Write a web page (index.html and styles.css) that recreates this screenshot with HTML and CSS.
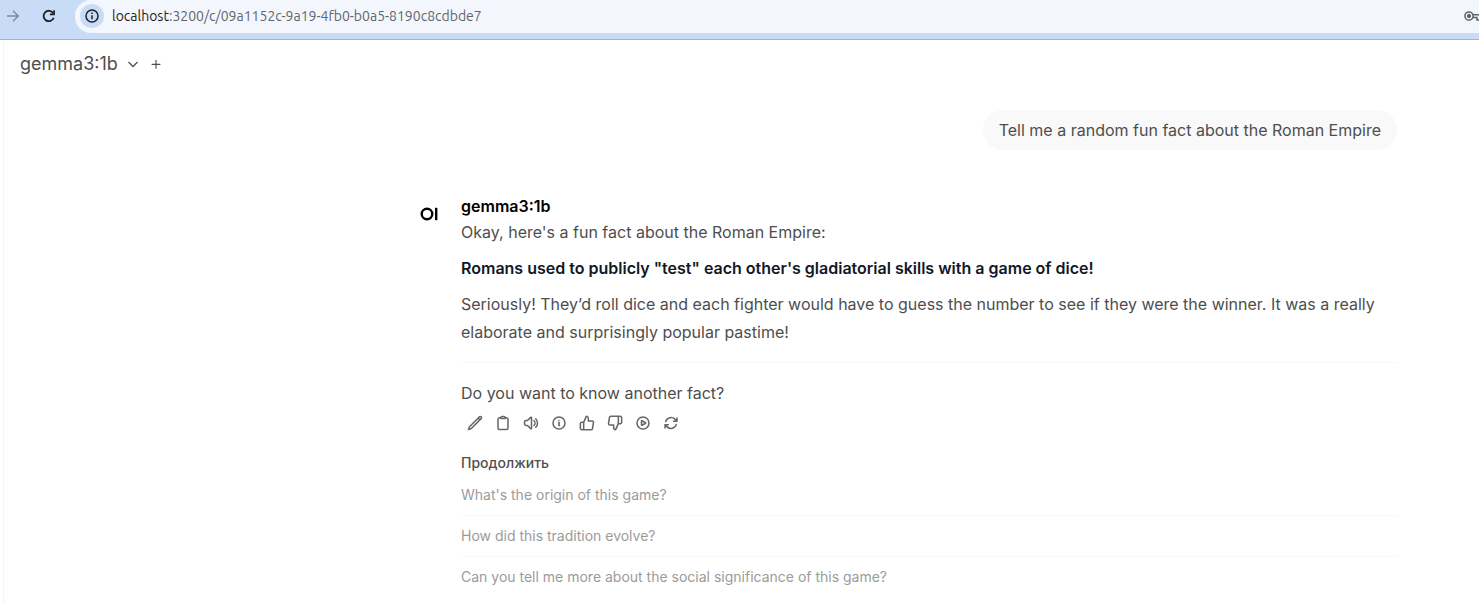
FILE: index.html
```html
<!DOCTYPE html>
<html lang="en">
<head>
<meta charset="utf-8">
<meta name="viewport" content="width=device-width, initial-scale=1">
<title>gemma3:1b</title>
<link rel="stylesheet" href="styles.css">
</head>
<body>
<header class="browser-bar">
  <button class="nav-button nav-forward" aria-label="Forward"><svg class="icon" viewBox="0 0 16 16"><path d="M2 8h11M8 2.7 13.300 8 8 13.300" stroke-width="1.500"/></svg></button>
  <button class="nav-button nav-reload" aria-label="Reload"><svg class="icon" viewBox="0 0 16 16"><path d="M12.700 9.700A5.200 5.200 0 1 1 12.200 5.200" stroke-width="1.800"/><path d="M13.900 2.200v5H8.900V5.500h3.300V2.200z" fill="currentColor" stroke="none"/></svg></button>
  <div class="address">
    <button class="site-info" aria-label="Site information"><svg class="icon" viewBox="0 0 16 16"><circle cx="8" cy="8" r="6" stroke-width="1.500"/><path d="M8 7.300v4M8 4.500v1.500" stroke-width="1.500"/></svg></button>
    <div class="url" role="textbox" contenteditable="true" spellcheck="false" aria-label="Address"><span class="host">localhost</span>:3200/c/09a1152c-9a19-4fb0-b0a5-8190c8cdbde7</div>
    <button class="key" aria-label="Passwords"><svg viewBox="0 0 20 16"><circle cx="5" cy="8" r="4.100" fill="none" stroke="currentColor" stroke-width="1.500"/><circle cx="5" cy="8" r="1.700" fill="currentColor"/><path d="M9 6.800h10v2.700h-2V12h-4V9.500H9" fill="none" stroke="currentColor" stroke-width="1.500"/></svg></button>
  </div>
</header>
<div class="app">
  <nav class="model-bar" aria-label="Model">
    <button class="model-picker">gemma3:1b<svg class="chevron" viewBox="0 0 24 24"><path d="m21 8-9 9-9-9" stroke-width="2.500"/></svg></button>
    <button class="add-model" aria-label="Add model"><svg viewBox="0 0 24 24"><path d="M12 5v15M4.500 12.500h15" stroke-width="2"/></svg></button>
  </nav>
  <main class="chat">
    <div class="user-message">Tell me a random fun fact about the Roman Empire</div>
    <article class="reply">
      <svg class="avatar" viewBox="0 0 28 28" role="img" aria-label="OI"><circle cx="12" cy="14" r="5.300" fill="none" stroke="#000" stroke-width="2.400"/><rect x="20" y="7.800" width="2.400" height="12.400" fill="#000"/></svg>
      <div class="reply-body">
        <h1 class="model-name">gemma3:1b</h1>
        <div class="prose">
          <p>Okay, here's a fun fact about the Roman Empire:</p>
          <p><strong>Romans used to publicly "test" each other's gladiatorial skills with a game of dice!</strong></p>
          <p>Seriously! They’d roll dice and each fighter would have to guess the number to see if they were the winner. It was a really elaborate and surprisingly popular pastime!</p>
          <hr>
          <p>Do you want to know another fact?</p>
        </div>
        <div class="actions">
          <button aria-label="Edit"><svg viewBox="0 0 24 24"><path d="M16.862 4.487l1.687-1.688a1.875 1.875 0 112.652 2.652L6.832 19.820a4.500 4.500 0 01-1.897 1.130l-2.685.8.8-2.685a4.500 4.500 0 011.130-1.897L16.863 4.487zm0 0L19.500 7.125"/></svg></button>
          <button aria-label="Copy"><svg viewBox="0 0 24 24"><path d="M15.666 3.888A2.250 2.250 0 0013.500 2.250h-3c-1.030 0-1.900.693-2.166 1.638m7.332 0c.055.194.084.400.084.612v0a.750.750 0 01-.750.750H9a.750.750 0 01-.750-.750v0c0-.212.030-.418.084-.612m7.332 0c.646.049 1.288.110 1.927.184 1.100.128 1.907 1.077 1.907 2.185V19.500a2.250 2.250 0 01-2.250 2.250H6.750A2.250 2.250 0 014.500 19.500V6.257c0-1.108.806-2.057 1.907-2.185a48.208 48.208 0 011.927-.184"/></svg></button>
          <button aria-label="Read aloud"><svg viewBox="0 0 24 24"><path d="M19.114 5.636a9 9 0 010 12.728M16.463 8.288a5.250 5.250 0 010 7.424M6.750 8.250l4.720-4.720a.750.750 0 011.280.530v15.880a.750.750 0 01-1.280.530l-4.720-4.720H4.510c-.880 0-1.704-.507-1.938-1.354A9.010 9.010 0 012.250 12c0-.830.112-1.633.322-2.396C2.806 8.756 3.630 8.250 4.510 8.250H6.750z"/></svg></button>
          <button aria-label="Information"><svg viewBox="0 0 24 24"><path d="M11.250 11.250l.041-.020a.750.750 0 011.063.852l-.708 2.836a.750.750 0 001.063.853l.041-.021M21 12a9 9 0 11-18 0 9 9 0 0118 0zm-9-3.750h.008v.008H12V8.250z"/></svg></button>
          <button aria-label="Good response"><svg viewBox="0 0 24 24"><path d="M14 9V5a3 3 0 0 0-3-3l-4 9v11h11.280a2 2 0 0 0 2-1.700l1.380-9a2 2 0 0 0-2-2.300zM7 22H4a2 2 0 0 1-2-2v-7a2 2 0 0 1 2-2h3"/></svg></button>
          <button aria-label="Bad response"><svg viewBox="0 0 24 24"><path d="M10 15v4a3 3 0 0 0 3 3l4-9V2H5.720a2 2 0 0 0-2 1.700l-1.380 9a2 2 0 0 0 2 2.300zm7-13h2.670A2.310 2.310 0 0 1 22 4v7a2.310 2.310 0 0 1-2.330 2H17"/></svg></button>
          <button aria-label="Continue response"><svg viewBox="0 0 24 24"><path d="M21 12a9 9 0 11-18 0 9 9 0 0118 0z"/><path d="M15.910 11.672a.375.375 0 010 .656l-5.603 3.113a.375.375 0 01-.557-.328V8.887c0-.286.307-.466.557-.327l5.603 3.112z"/></svg></button>
          <button aria-label="Regenerate"><svg viewBox="0 0 24 24"><path d="M16.023 9.348h4.992v-.001M2.985 19.644v-4.992m0 0h4.992m-4.993 0l3.181 3.183a8.250 8.250 0 0013.803-3.700M4.031 9.865a8.250 8.250 0 0113.803-3.700l3.181 3.182m0-4.991v4.990"/></svg></button>
        </div>
        <section class="follow-up">
          <h2 lang="ru">Продолжить</h2>
          <ul>
            <li><button>What's the origin of this game?</button></li>
            <li><button>How did this tradition evolve?</button></li>
            <li><button>Can you tell me more about the social significance of this game?</button></li>
          </ul>
        </section>
      </div>
    </article>
  </main>
</div>
</body>
</html>
```
FILE: styles.css
```css
* { box-sizing: border-box; }
body {
  margin: 0;
  min-height: 100vh;
  display: flex;
  flex-direction: column;
  overflow-x: hidden;
  background: #fff;
  color: #4e4e4e;
  font-family: Inter, "Liberation Sans", sans-serif;
  font-size: 16px;
}
button {
  margin: 0;
  padding: 0;
  border: 0;
  background: none;
  color: inherit;
  font: inherit;
  cursor: pointer;
}
svg { display: block; fill: none; stroke: currentColor; }
h1, h2, p, ul { margin: 0; padding: 0; }
ul { list-style: none; }

.browser-bar {
  display: flex;
  align-items: flex-start;
  gap: 20px;
  height: 40px;
  padding-left: 5px;
  background: #c9dcf7;
  border-bottom: 1px solid #a2b2d0;
}
.nav-button { padding: 8px 0; }
.icon { width: 16px; height: 16px; }
.nav-forward { color: #7f8b9f; }
.nav-reload { color: #1f2023; }
.address {
  flex: 1;
  display: flex;
  align-items: center;
  height: 33px;
  margin-left: -2px;
  padding: 0 0 1px 5px;
  background: #f3f6fc;
  border-radius: 16px 0 0 16px;
}
.site-info {
  display: grid;
  place-items: center;
  width: 24px;
  height: 24px;
  border-radius: 50%;
  background: #c9dcf7;
  color: #202124;
}
.url {
  flex: 1;
  padding-left: 8px;
  color: #62666b;
  font: 14px/20px Ubuntu, Roboto, sans-serif;
  white-space: nowrap;
  outline: 0;
}
.host { color: #1f1f1f; }
.key { width: 15px; overflow: hidden; color: #5f6368; }
.key svg { width: 20px; height: 16px; }

.app {
  flex: 1;
  margin-left: 3px;
  border-left: 1px solid #f3f3f3;
}
.model-bar {
  display: flex;
  align-items: center;
  gap: 10px;
  padding: 10px 16px;
}
.model-picker {
  display: flex;
  align-items: center;
  gap: 9px;
  font-size: 18px;
  line-height: 28px;
}
.chevron { width: 12px; height: 12px; }
.add-model svg { width: 14px; height: 14px; }

.chat {
  display: flex;
  flex-direction: column;
  max-width: 1064px;
  margin-left: auto;
  padding: 22px 82px 0 0;
}
.user-message {
  align-self: flex-end;
  padding: 8px 16px;
  border-radius: 20px;
  background: #f9f9f9;
  line-height: 24px;
}
.reply {
  display: flex;
  gap: 18px;
  margin-top: 44px;
}
.avatar { flex: none; width: 28px; height: 28px; margin-top: 6px; stroke: none; }
.reply-body { flex: 1; min-width: 0; }
.model-name {
  color: #000;
  font-size: 16px;
  font-weight: 600;
  line-height: 24px;
}
.prose { line-height: 28px; }
.prose p + p { margin-top: 8px; }
.prose strong { color: #111827; font-weight: 600; }
.prose hr { margin: 16px 0; border: 0; border-top: 1px solid #f8f8f8; }
.actions { display: flex; margin-top: 2px; color: #676767; }
.actions button { padding: 6px; }
.actions svg {
  width: 16px;
  height: 16px;
  stroke-width: 2.3;
  stroke-linecap: round;
  stroke-linejoin: round;
}
.follow-up { margin-top: 16px; font-size: 14px; line-height: 20px; }
.follow-up h2 { font-size: 14px; font-weight: 500; }
.follow-up ul { margin-top: 2px; }
.follow-up li + li { border-top: 1px solid #f8f8f8; }
.follow-up button {
  width: 100%;
  padding: 10px 0;
  color: #9b9b9b;
  text-align: left;
}
```
